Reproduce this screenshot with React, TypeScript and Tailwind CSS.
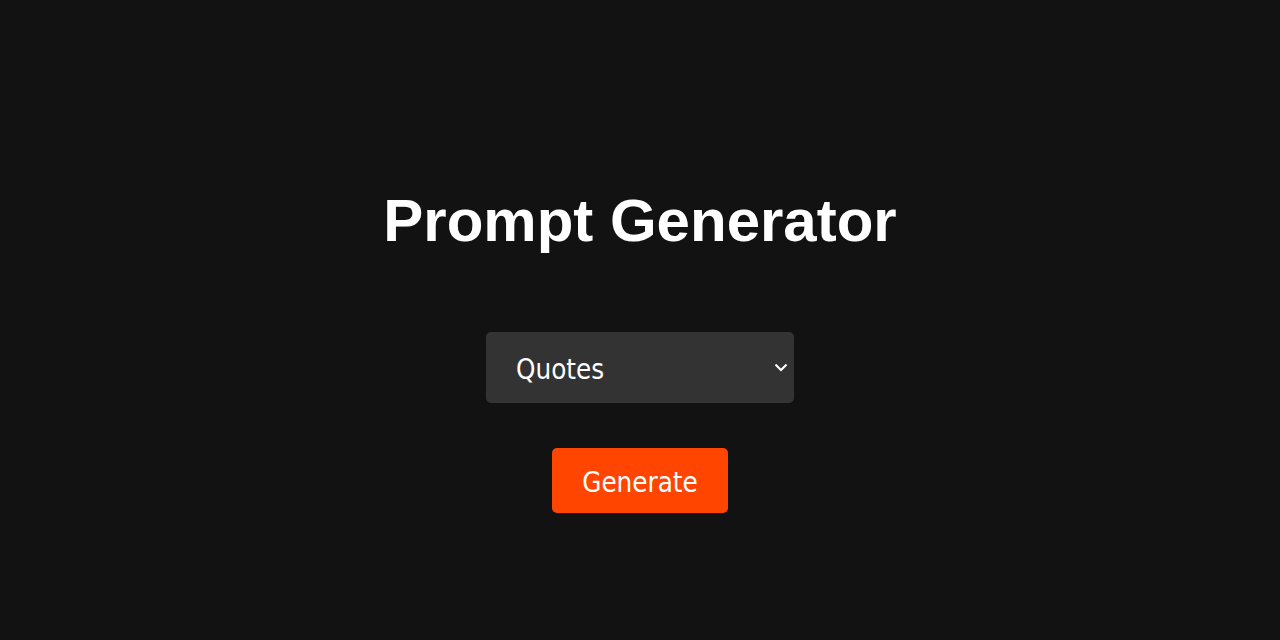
import React from "react";

function Chevron() {
  return (
    <svg
      width="12"
      height="8"
      viewBox="0 0 12 8"
      fill="none"
      className="absolute right-[7px] top-[32px]"
    >
      <path
        d="M1.2 1.2L6 6L10.8 1.2"
        stroke="#ffffff"
        strokeWidth="2"
        strokeLinecap="square"
        strokeLinejoin="miter"
      />
    </svg>
  );
}

export default function App() {
  return (
    <div className="min-h-screen w-full bg-[#121212] flex flex-col items-center pt-[191px]">
      <h1 className="text-white font-bold text-[60px] leading-[60px] font-['Liberation_Sans',Arial,sans-serif]">
        Prompt Generator
      </h1>
      <div className="relative mt-[81px] w-[308px] h-[71px] rounded-[5px] bg-[#333333]">
        <div className="pl-[30px] pt-[21px] text-white text-[27.5px] leading-[32px] font-['DejaVu_Sans_Condensed','DejaVu_Sans',sans-serif]">
          Quotes
        </div>
        <Chevron />
      </div>
      <button className="mt-[45px] w-[176px] h-[65px] pt-[2px] rounded-[5px] bg-[#ff4500] text-white text-[27.5px] leading-[32px] font-['DejaVu_Sans_Condensed','DejaVu_Sans',sans-serif]">
        Generate
      </button>
    </div>
  );
}
